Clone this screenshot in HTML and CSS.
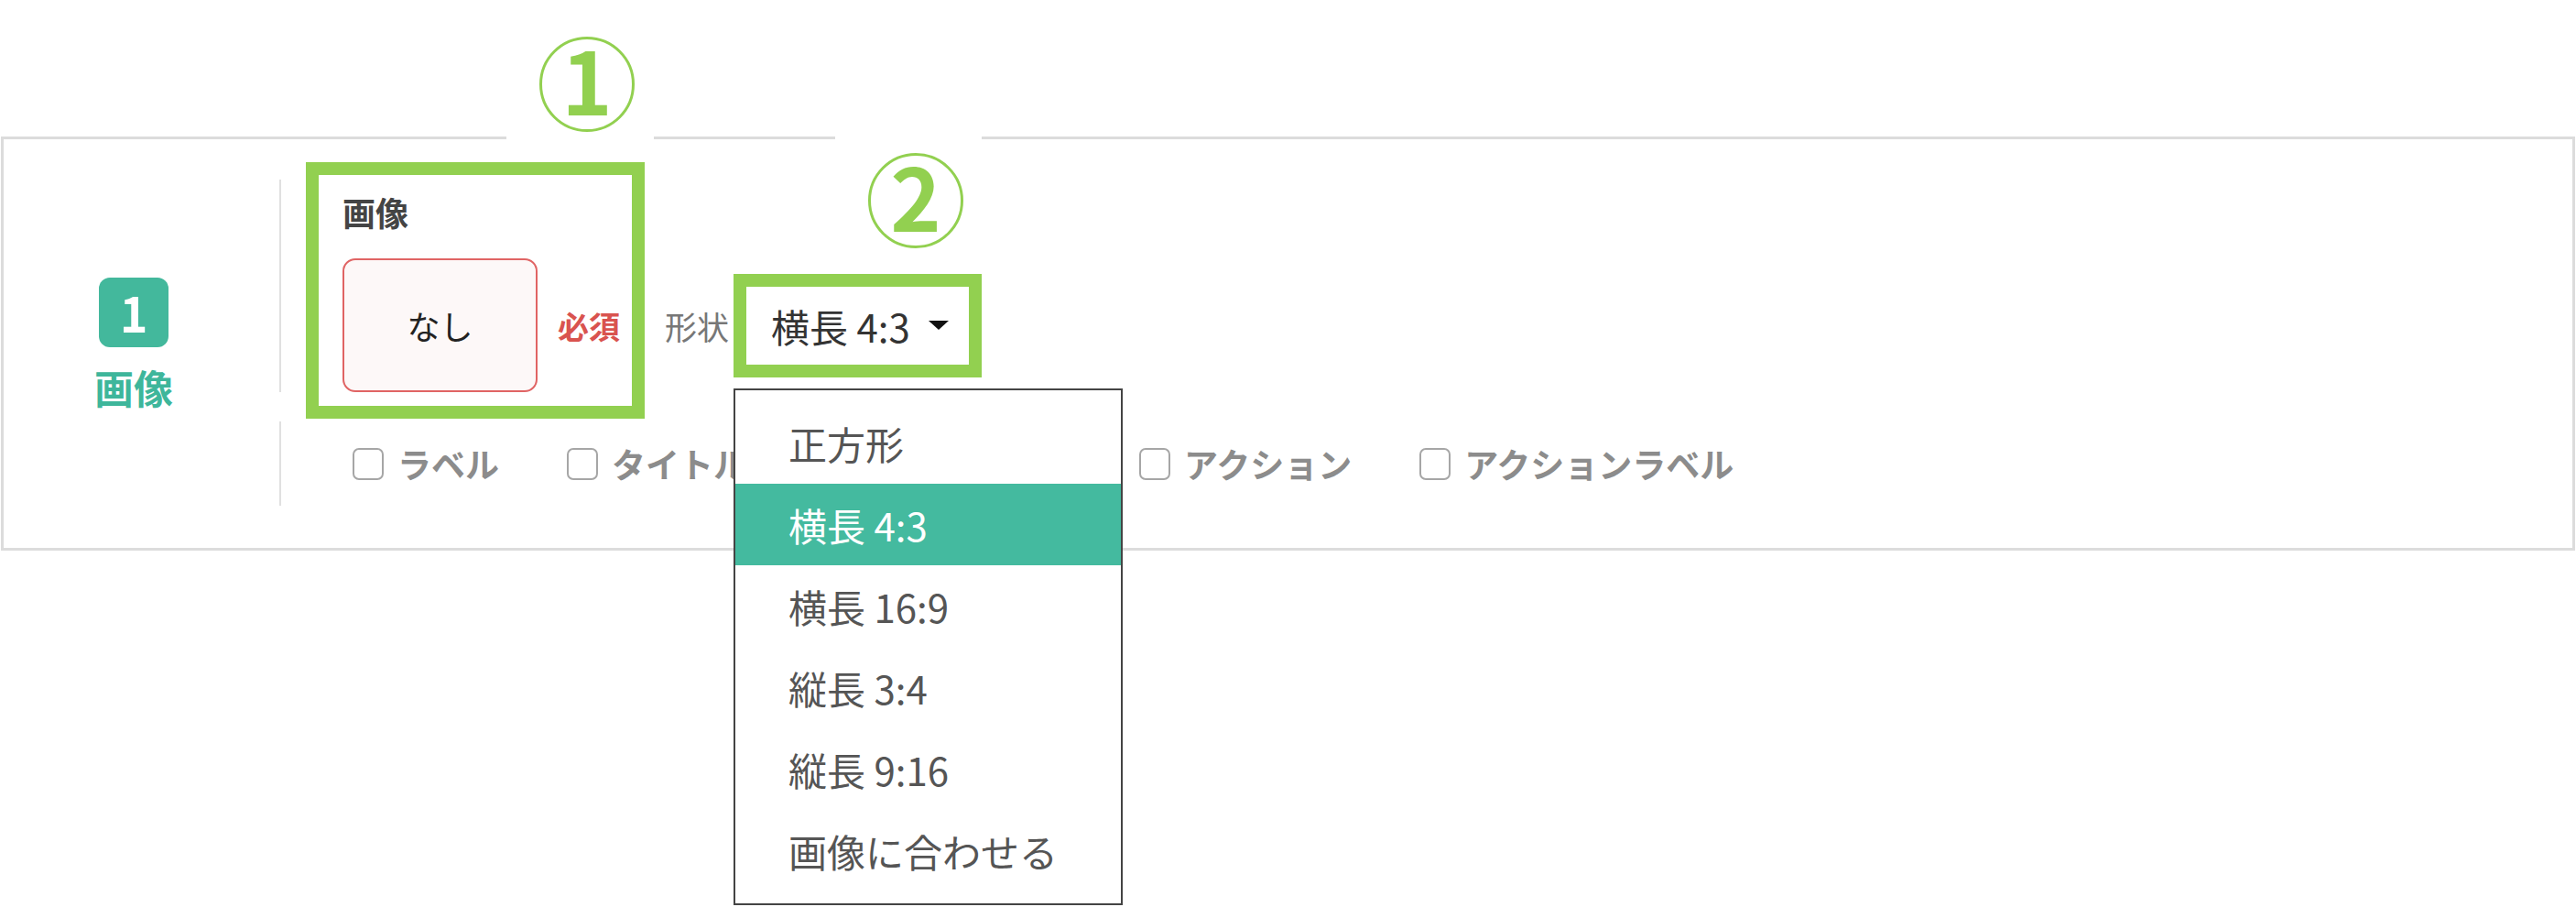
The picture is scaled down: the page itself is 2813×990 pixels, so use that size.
FILE: index.html
```html
<!DOCTYPE html>
<html lang="ja">
<head>
<meta charset="utf-8">
<title>画像</title>
<link rel="stylesheet" href="styles.css">
</head>
<body>
<div class="page">
  <div class="annot annot-1">
    <div class="circled">1</div>
  </div>
  <div class="annot annot-2">
    <div class="circled">2</div>
  </div>
  <div class="annot-box annot-box-1"></div>

  <section class="panel">
    <div class="side">
      <div class="badge">1</div>
      <div class="side-title">画像</div>
    </div>
    <div class="main">
      <div class="row row-fields">
        <div class="field-label">画像</div>
        <div class="controls">
          <div class="image-box">なし</div>
          <span class="required">必須</span>
          <span class="shape-label">形状</span>
          <div class="select">
            <span class="select-value">横長 4:3</span>
            <span class="caret"></span>
            <ul class="menu">
              <li>正方形</li>
              <li class="active">横長 4:3</li>
              <li>横長 16:9</li>
              <li>縦長 3:4</li>
              <li>縦長 9:16</li>
              <li>画像に合わせる</li>
            </ul>
          </div>
        </div>
      </div>
      <div class="row row-checks">
        <label class="check"><span class="box"></span><span class="check-text">ラベル</span></label>
        <label class="check"><span class="box"></span><span class="check-text">タイトル</span></label>
        <label class="check check-covered"><span class="box"></span><span class="check-text check-text-wide">サブタイトル</span></label>
        <label class="check"><span class="box"></span><span class="check-text">アクション</span></label>
        <label class="check"><span class="box"></span><span class="check-text">アクションラベル</span></label>
      </div>
    </div>
  </section>
</div>
</body>
</html>
```

FILE: styles.css
```css
* {
  box-sizing: border-box;
}

html, body {
  margin: 0;
  padding: 0;
  background: #ffffff;
}

body {
  font-family: "Noto Sans CJK JP", "Noto Sans", sans-serif;
  width: 2813px;
  height: 990px;
  overflow: hidden;
}

.page {
  position: relative;
  width: 2813px;
  height: 990px;
  padding-top: 149px;
  padding-left: 1px;
}

/* ---------- annotations ---------- */
.annot {
  position: absolute;
  background: #ffffff;
  z-index: 3;
}

.annot-1 {
  left: 553px;
  top: 20px;
  width: 161px;
  height: 140px;
  padding: 20px 0 0 36px;
}

.annot-2 {
  left: 912px;
  top: 140px;
  width: 160px;
  height: 140px;
  padding: 27px 0 0 36px;
}

.circled {
  width: 104px;
  height: 104px;
  border: 3px solid #92d050;
  border-radius: 50%;
  color: #92d050;
  font-weight: 700;
  font-size: 94px;
  line-height: 84px;
  text-align: center;
  overflow: visible;
}

.annot-box {
  position: absolute;
  border: 14px solid #92d050;
  z-index: 3;
}

.annot-box-1 {
  left: 334px;
  top: 177px;
  width: 370px;
  height: 280px;
}

/* ---------- panel ---------- */
.panel {
  display: flex;
  width: 2811px;
  height: 452px;
  border: 3px solid #dcdcdc;
}

.side {
  width: 301px;
  flex: none;
  display: flex;
  flex-direction: column;
  justify-content: center;
  align-items: center;
  padding-right: 17px;
}

.badge {
  width: 76px;
  height: 76px;
  border-radius: 12px;
  background: #43b89c;
  color: #ffffff;
  font-weight: 700;
  font-size: 52px;
  line-height: 76px;
  text-align: center;
}

.side-title {
  margin-top: 17px;
  font-size: 43px;
  line-height: 52px;
  font-weight: 700;
  color: #3eb69b;
}

.main {
  flex: 1;
  display: flex;
  flex-direction: column;
}

.row {
  border-left: 2px solid #e0e0e0;
}

.row-fields {
  margin-top: 44px;
  padding: 11px 0 0 67px;
}

.field-label {
  font-size: 36px;
  line-height: 48px;
  height: 48px;
  font-weight: 700;
  color: #444444;
  margin-bottom: 27px;
}

.controls {
  display: flex;
  align-items: center;
}

.image-box {
  width: 213px;
  height: 146px;
  border: 2px solid #e06464;
  border-radius: 14px;
  background: #fdf8f8;
  display: flex;
  align-items: center;
  justify-content: center;
  font-size: 36px;
  color: #222222;
}

.required {
  margin-left: 22px;
  font-size: 34px;
  font-weight: 700;
  color: #d9534f;
}

.shape-label {
  margin-left: 49px;
  font-size: 35px;
  color: #777777;
}

.select {
  position: relative;
  margin-left: 19px;
  width: 243px;
  height: 85px;
  background: #ffffff;
  outline: 14px solid #92d050;
  display: flex;
  align-items: center;
  padding-left: 27px;
}

.select-value {
  font-size: 42px;
  color: #333333;
  white-space: nowrap;
}

.caret {
  margin-left: 20px;
  width: 0;
  height: 0;
  border-left: 11.5px solid transparent;
  border-right: 11.5px solid transparent;
  border-top: 10px solid #111111;
}

.menu {
  position: absolute;
  left: -14px;
  top: 111px;
  width: 425px;
  margin: 0;
  padding: 13px 0;
  list-style: none;
  background: #ffffff;
  border: 2px solid #444444;
  z-index: 5;
}

.menu li {
  height: 89px;
  line-height: 89px;
  padding-left: 58px;
  font-size: 42px;
  color: #555555;
  white-space: nowrap;
}

.menu li.active {
  background: #44ba9f;
  color: #ffffff;
}

.row-checks {
  margin-top: 32px;
  height: 92px;
  padding-left: 78px;
  display: flex;
  align-items: center;
  gap: 74px;
}

.check {
  display: flex;
  align-items: center;
}

.check-covered {
  visibility: hidden;
}

.box {
  width: 34px;
  height: 35px;
  border: 2px solid #a6a6a6;
  border-radius: 7px;
  background: #ffffff;
}

.check-text {
  margin-left: 15px;
  font-size: 37px;
  font-weight: 700;
  color: #8c8c8c;
  white-space: nowrap;
}

.check-text-wide {
  width: 231px;
}
```
